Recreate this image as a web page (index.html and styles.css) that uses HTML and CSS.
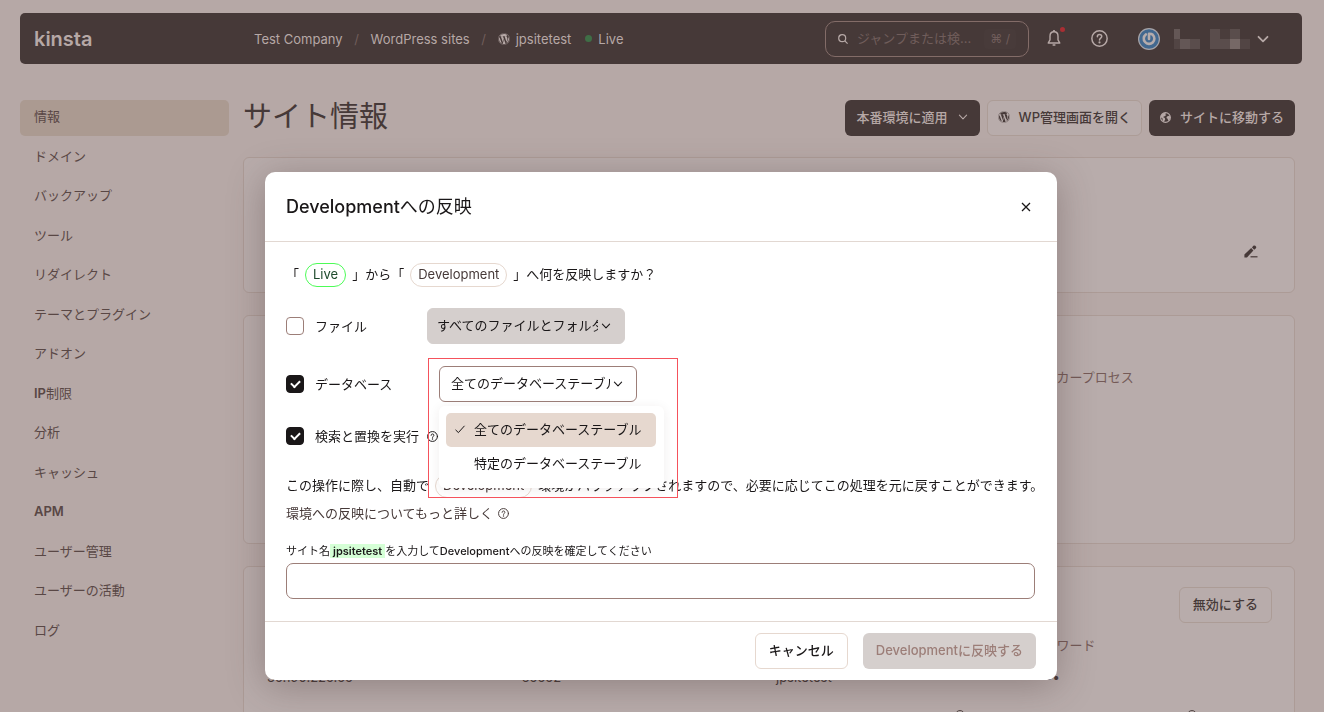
FILE: index.html
```html
<!DOCTYPE html>
<html lang="ja">
<head>
<meta charset="utf-8">
<title>サイト情報</title>
<link rel="stylesheet" href="styles.css">
</head>
<body>
<svg class="sprite" aria-hidden="true">
  <symbol id="wp" viewBox="0 0 512 512"><path fill="currentColor" d="M61.7 169.4l101.5 278C92.2 413 43.3 340.2 43.3 256c0-30.9 6.6-60.1 18.4-86.6zm337.9 75.9c0-26.3-9.4-44.5-17.5-58.7-10.8-17.5-20.9-32.4-20.9-49.9 0-19.6 14.8-37.8 35.7-37.8.9 0 1.8.1 2.8.2-37.9-34.7-88.3-55.9-143.7-55.9-74.3 0-139.7 38.1-177.8 95.9 5 .2 9.7.3 13.7.3 22.2 0 56.7-2.7 56.7-2.7 11.5-.7 12.8 16.2 1.4 17.5 0 0-11.5 1.3-24.3 2l77.5 230.4L249.8 247l-33.1-90.8c-11.5-.7-22.3-2-22.3-2-11.5-.7-10.1-18.2 1.3-17.5 0 0 35.1 2.7 56 2.7 22.2 0 56.7-2.7 56.7-2.7 11.5-.7 12.8 16.2 1.4 17.5 0 0-11.5 1.3-24.3 2l76.9 228.7 21.2-70.9c9-29.4 16-50.5 16-68.7zm-139.9 29.3l-63.8 185.5c19.1 5.6 39.2 8.7 60.1 8.7 24.8 0 48.5-4.3 70.6-12.1-.6-.9-1.1-1.9-1.5-2.9l-65.4-179.2zm183-120.7c.9 6.8 1.4 14 1.4 21.9 0 21.6-4 45.8-16.2 76.2l-65 187.9C426.2 403 468.7 334.5 468.7 256c0-37-9.4-71.8-26-102.1zM504 256c0 136.8-111.3 248-248 248C119.2 504 8 392.7 8 256 8 119.2 119.2 8 256 8c136.7 0 248 111.2 248 248zm-11.4 0c0-130.5-106.2-236.6-236.6-236.6C125.5 19.4 19.4 125.5 19.4 256S125.6 492.6 256 492.6c130.5 0 236.6-106.1 236.6-236.6z"/></symbol>
  <symbol id="chevron" viewBox="0 0 10 10"><path fill="none" stroke="currentColor" stroke-width="1.1" stroke-linecap="round" stroke-linejoin="round" d="M1.400 3.200 5 6.800 8.600 3.200"/></symbol>
  <symbol id="help" viewBox="0 0 16 16"><g fill="none" stroke="currentColor" stroke-width="1.4" stroke-linecap="round"><circle cx="8" cy="8" r="7.200"/><path d="M6 6.300C6 5 6.900 4.300 8 4.300s2.100.7 2.100 1.900C10.100 7.600 8 7.700 8 9.300"/></g><circle cx="8" cy="11.700" r="1" fill="currentColor"/></symbol>
</svg>

<div class="page">
  <header class="topbar">
    <a class="logo" href="#">kinsta</a>
    <nav class="crumbs">
      <a href="#">Test Company</a><span class="slash">/</span>
      <a href="#">WordPress sites</a><span class="slash">/</span>
      <a href="#" class="crumb-site"><svg class="i12"><use href="#wp"/></svg>jpsitetest</a>
      <a href="#" class="crumb-env"><span class="dot"></span>Live</a>
    </nav>
    <div class="tools">
      <label class="search">
        <svg class="i10" viewBox="0 0 10 10" fill="none" stroke="currentColor" stroke-width="1.2"><circle cx="4.200" cy="4.200" r="3.500"/><path d="M6.800 6.800 9.600 9.600"/></svg>
        <input type="text" placeholder="ジャンプまたは検…" aria-label="検索">
        <kbd>⌘ /</kbd>
      </label>
      <button class="icon-btn bell" aria-label="通知">
        <svg width="14" height="17" viewBox="0 0 14 17" fill="none" stroke="currentColor" stroke-width="1.4" stroke-linejoin="round"><path d="M7 1.800C4.400 1.800 3 3.800 3 6.200v3.600L1.200 13h11.600L11 9.800V6.200C11 3.800 9.600 1.800 7 1.800Z"/><path d="M7 0v2M5.600 15h2.800" stroke-width="1.700"/></svg>
        <span class="alert"></span>
      </button>
      <button class="icon-btn" aria-label="ヘルプ"><svg class="i17"><use href="#help"/></svg></button>
      <button class="user" aria-label="アカウント">
        <svg class="i22" viewBox="0 0 22 22"><circle cx="11" cy="11" r="11" fill="#a7a4a8"/><circle cx="11" cy="11" r="9.800" fill="#42688f"/><path d="M7.800 6.400a5.300 5.300 0 1 0 7 .4Q13.500 5.600 11 5.700V11" fill="none" stroke="#b5acac" stroke-width="2.600" stroke-linecap="round" stroke-linejoin="round"/></svg>
        <svg class="mask" width="76" height="20" viewBox="0 0 76 20" shape-rendering="crispEdges"><path fill="#645756" d="M0 0h6v10H0zM6 10h10v10H6z"/><path fill="#5a4d4c" d="M16 10h10v10H16zM36 0h10v10H36zM56 0h10v10H56zM36 10h20v10H36z"/><path fill="#524544" d="M0 10h6v10H0zM66 10h10v10H66z"/><path fill="#4a3d3c" d="M46 0h10v10H46z"/><path fill="#766866" d="M56 10h10v10H56z"/></svg>
        <svg class="i12 user-chev" viewBox="0 0 12 12"><path fill="none" stroke="currentColor" stroke-width="1.800" stroke-linecap="round" stroke-linejoin="round" d="M1.500 3.800 6 8.300 10.500 3.800"/></svg>
      </button>
    </div>
  </header>

  <div class="columns">
    <nav class="side">
      <a class="active" href="#">情報</a>
      <a href="#">ドメイン</a>
      <a href="#">バックアップ</a>
      <a href="#">ツール</a>
      <a href="#">リダイレクト</a>
      <a href="#">テーマとプラグイン</a>
      <a href="#">アドオン</a>
      <a href="#"><b>IP</b>制限</a>
      <a href="#">分析</a>
      <a href="#">キャッシュ</a>
      <a href="#"><b>APM</b></a>
      <a href="#">ユーザー管理</a>
      <a href="#">ユーザーの活動</a>
      <a href="#">ログ</a>
    </nav>
    <main class="content">
      <div class="heading">
        <h1>サイト情報</h1>
        <div class="actions">
          <button class="btn dark">本番環境に適用<svg class="i10"><use href="#chevron"/></svg></button>
          <button class="btn faded"><svg class="i12"><use href="#wp"/></svg>WP管理画面を開く</button>
          <button class="btn dark"><svg class="i11" viewBox="0 0 11 11"><circle cx="5.500" cy="5.500" r="4.900" fill="none" stroke="currentColor" stroke-width="1.100"/><path fill="currentColor" d="M1 3.500 3 1.200 6 .8 5.200 2.200 6.400 3 4.600 4.200 3 5 4.800 6 5.200 7.600 3.800 10 2.600 8.400 2.600 6.400.8 5.200ZM7 4.400 9.600 3.600 10.300 5.500 9.400 8 8.200 8.800 7.600 6.800 6.400 6Z"/></svg>サイトに移動する</button>
        </div>
      </div>
      <section class="card card-basic">
        <button class="icon-btn edit" aria-label="編集"><svg width="14" height="13" viewBox="0 0 14 13"><path fill="currentColor" d="M.4 12.400v-3L7.200 3.100 9.400 5.400 3 12.400ZM8 2.400l2.200 2.300L11.700 3.500a1.600 1.600 0 0 0 0-2.300L11.300.8a1.600 1.600 0 0 0-2 0Z"/><path stroke="currentColor" stroke-width="1.200" d="M6.500 11.800h7"/></svg></button>
      </section>
      <section class="card card-env">
        <dl class="facts"><div class="last-col"><dt>ワーカープロセス</dt></div></dl>
      </section>
      <section class="card card-sftp">
        <button class="btn faded">無効にする</button>
        <dl class="facts">
          <div><dt></dt><dd>35.190.225.55</dd></div>
          <div><dt></dt><dd>65552</dd></div>
          <div><dt></dt><dd>jpsitetest</dd></div>
          <div><dt>パスワード</dt><dd>••••</dd></div>
        </dl>
        <div class="hints"><svg class="i10"><use href="#help"/></svg><svg class="i10"><use href="#help"/></svg></div>
      </section>
    </main>
  </div>
</div>

<div class="overlay">
  <form class="dialog" role="dialog" aria-labelledby="title">
    <header class="dialog-head">
      <h2 id="title"><b>Development</b>への反映</h2>
      <button type="button" class="close" aria-label="閉じる"><svg class="i10" viewBox="0 0 10 10"><path stroke="currentColor" stroke-width="1.300" d="M1 1 9 9M9 1 1 9"/></svg></button>
    </header>
    <div class="dialog-body">
      <p class="question">「<span class="pill live">Live</span>」から「<span class="pill">Development</span>」へ何を反映しますか？</p>

      <div class="row">
        <label class="check"><input type="checkbox">ファイル</label>
        <div class="pick muted">
          <select aria-label="ファイルの範囲"><option>すべてのファイルとフォルダ</option></select>
          <svg class="i10"><use href="#chevron"/></svg>
        </div>
      </div>

      <div class="row">
        <label class="check"><input type="checkbox" checked>データベース</label>
        <div class="pick db">
          <select aria-label="データベースの範囲"><option>全てのデータベーステーブル</option><option>特定のデータベーステーブル</option></select>
          <svg class="i10"><use href="#chevron"/></svg>
          <div class="menu" role="listbox">
            <button type="button" role="option" aria-selected="true"><svg class="i12" viewBox="0 0 12 12"><path fill="none" stroke="currentColor" stroke-width="1" d="M1.500 6.800 4.400 9.600 10.500 2.800"/></svg>全てのデータベーステーブル</button>
            <button type="button" role="option" aria-selected="false">特定のデータベーステーブル</button>
          </div>
          <div class="marker"></div>
        </div>
      </div>

      <div class="row replace">
        <label class="check"><input type="checkbox" checked>検索と置換を実行</label>
        <svg class="i11"><use href="#help"/></svg>
      </div>

      <p class="note">この操作に際し、自動で<span class="pill">Development</span>環境がバックアップされますので、必要に応じてこの処理を元に戻すことができます。</p>
      <p class="note"><a href="#">環境への反映についてもっと詳しく<svg class="i11"><use href="#help"/></svg></a></p>

      <label class="confirm-label" for="confirm">サイト名<mark>jpsitetest</mark>を入力して<b>Development</b>への反映を確定してください</label>
      <input class="confirm" id="confirm" type="text">
    </div>
    <footer class="dialog-foot">
      <button type="button" class="btn light">キャンセル</button>
      <button type="submit" class="btn disabled" disabled>Developmentに反映する</button>
    </footer>
  </form>
</div>
</body>
</html>
```
FILE: styles.css
```css
* { box-sizing: border-box; }

body {
  margin: 0;
  background: #b6a8a6;
  color: #463938;
  font: 13px/20px Inter, "Noto Sans CJK JP", sans-serif;
}

h1, h2, p, dl, dd { margin: 0; }
h1, h2 { font-weight: 400; }
b { font-weight: 500; }
a { color: inherit; text-decoration: none; }
button, input, select { font: inherit; color: inherit; }
button { padding: 0; border: 0; background: none; }
svg { display: block; flex: none; }

.sprite { position: absolute; width: 0; height: 0; }
.i10 { width: 10px; height: 10px; }
.i11 { width: 11px; height: 11px; }
.i12 { width: 12px; height: 12px; }
.i17 { width: 17px; height: 17px; }
.i22 { width: 22px; height: 22px; }

/* Top bar */
.page { height: 100vh; padding: 13px 22px 0 20px; overflow: hidden; }
.topbar {
  display: flex;
  align-items: center;
  height: 51px;
  padding: 0 33px 0 14px;
  border-radius: 5px;
  background: #463938;
  color: #b6a8a6;
}
.logo { width: 220px; font-size: 20px; font-weight: 600; }
.crumbs { display: flex; align-items: center; }
.slash { width: 28px; text-align: center; color: #705d5b; }
.crumb-site, .crumb-env { display: flex; align-items: center; gap: 6px; }
.crumb-env { margin-left: 14px; }
.dot { width: 7px; height: 7px; border-radius: 50%; background: #3f6e46; }

.tools { display: flex; align-items: center; margin-left: auto; }
.search {
  display: flex;
  align-items: center;
  width: 204px;
  height: 36px;
  padding: 0 12px;
  border: 1px solid #836c68;
  border-radius: 10px;
}
.search input {
  flex: 1;
  min-width: 0;
  padding: 0 0 2px 9px;
  border: 0;
  background: none;
}
.search input::placeholder { color: #705d5b; opacity: 1; }
.search kbd { padding: 0 6px; border-radius: 4px; background: #483b3a; color: #705d5b; font: 12px/20px Inter, "DejaVu Sans", sans-serif; }
.icon-btn { display: grid; place-items: center; }
.bell { position: relative; margin: 0 30px 0 18px; }
.alert { position: absolute; top: -3px; right: -4px; width: 5px; height: 5px; border-radius: 50%; background: #a92e33; }
.user { display: flex; align-items: center; gap: 14px; margin-left: 30px; }
.user-chev { margin-left: -7px; }

/* Page columns */
.columns { display: flex; gap: 14px; padding: 36px 7px 0 0; }
.side {
  display: grid;
  align-content: space-between;
  flex: none;
  width: 209px;
  height: 550px;
  color: #594745;
}
.side a { height: 36px; padding-left: 14px; border-radius: 5px; line-height: 33px; }
.side b { font-weight: 600; }
.side .active { background: #ab9a91; }

.content { flex: 1; min-width: 0; }
.heading { display: flex; align-items: center; justify-content: space-between; height: 36px; margin-bottom: 21px; }
h1 { padding-bottom: 3px; font-size: 29px; line-height: 36px; }
.actions { display: flex; gap: 7px; }
.btn {
  display: flex;
  align-items: center;
  justify-content: center;
  gap: 9px;
  height: 36px;
  padding: 0 13px 2px;
  border: 1px solid transparent;
  border-radius: 6px;
  font-weight: 500;
  white-space: nowrap;
}
.actions .btn { padding: 0 10px 2px; }
.actions .btn:first-child { gap: 10px; padding: 0 11px 2px; }
.btn.dark { background: #463938; color: #b6a8a6; }
.btn.faded { background: #b8acab; border-color: #ac9c96; }
.btn.light { border-color: #e6d8cf; color: #1a1718; }
.btn.disabled { padding: 0 12px 2px; background: #d5cfcd; color: #9c7e78; }

.card {
  margin-bottom: 22px;
  padding: 20px 22px 20px 23px;
  border: 1px solid #ac9b96;
  border-radius: 6px;
  background: #b8acab;
}
.card-basic { display: flex; align-items: flex-end; justify-content: flex-end; height: 136px; padding: 20px 36px 34px; }
.card-env { height: 229px; padding-top: 51px; }
.card-sftp { height: 300px; }
.card-sftp .btn { margin-left: auto; }
.facts { display: grid; grid-template-columns: repeat(4, 1fr); margin: 12px -13px 0 0; }
.card-env .facts { margin-top: 0; }
.last-col { grid-column: 4; }
dt { height: 20px; color: #745a57; }
dd { margin-top: 12px; color: #463938; }
.facts div { white-space: nowrap; }
.hints { display: flex; justify-content: flex-end; gap: 222px; margin: 23px 75px 0; }

/* Dialog */
.overlay { position: fixed; inset: 0; display: flex; align-items: flex-start; justify-content: center; padding: 172px 2px 0 0; }
.dialog {
  width: 792px;
  max-width: 100%;
  border-radius: 10px;
  background: #fff;
  color: #1a1718;
  box-shadow: 0 6px 36px rgba(70, 50, 50, 0.35);
}
.dialog-head {
  display: flex;
  align-items: center;
  justify-content: space-between;
  height: 70px;
  padding: 0 26px 0 21px;
  border-bottom: 1px solid #e2d8d2;
}
h2 { font-size: 18px; line-height: 24px; }
.dialog-body { padding: 20px 22px 22px 21px; }
.question, .note { white-space: nowrap; }
.question { margin-bottom: 21px; line-height: 24px; }
.pill {
  display: inline-block;
  height: 24px;
  margin: 0 6px;
  padding: 0 7px;
  border: 1px solid #e6d8cf;
  border-radius: 12px;
  color: #463938;
  line-height: 21px;
}
.pill.live { border-color: #4dfc57; color: #1d4a2c; }

.row { display: flex; align-items: center; height: 36px; margin-bottom: 22px; }
.check { display: flex; align-items: center; gap: 11px; width: 141px; white-space: nowrap; }
.check input {
  appearance: none;
  display: grid;
  place-items: center;
  width: 18px;
  height: 18px;
  margin: 0;
  border: 1px solid #9c7e78;
  border-radius: 4px;
}
.check input:checked { border-color: #1a1718; background: #1a1718; }
.check input:checked::before {
  content: "";
  width: 7px;
  height: 4px;
  margin-bottom: 2px;
  border: solid #fff;
  border-width: 0 0 2px 2px;
  rotate: -45deg;
}
.pick { position: relative; width: 198px; }
.pick select {
  appearance: none;
  display: block;
  width: 100%;
  height: 36px;
  padding: 0 26px 2px 11px;
  border: 1px solid #9c7e78;
  border-radius: 6px;
  background: #fff;
}
.pick > svg { position: absolute; right: 14px; top: 13px; pointer-events: none; }
.muted select { padding-left: 9px; border-color: #d5cfcd; background: #d5cfcd; }
.db { margin-left: 12px; }
.menu {
  position: absolute;
  z-index: 1;
  top: 100%;
  left: 0;
  width: 225px;
  margin-top: 4px;
  padding: 7px 8px 7px 7px;
  border-radius: 6px;
  background: #fff;
  box-shadow: 0 2px 12px rgba(60, 40, 40, 0.08);
}
.menu button { display: flex; align-items: center; gap: 8px; width: 100%; height: 34px; padding: 0 0 2px 28px; border-radius: 5px; white-space: nowrap; }
.menu [aria-selected="true"] { padding-left: 8px; background: #e6d8cf; }
.marker { position: absolute; z-index: 2; top: -8px; left: -11px; width: 250px; height: 140px; border: 1px solid #f5525c; pointer-events: none; }
.replace { height: 20px; margin: 24px 0 25px; }
.note { line-height: 28px; }
.note .pill { vertical-align: middle; }
.note a { display: inline-flex; align-items: center; gap: 5px; color: #463938; }
.confirm-label { display: block; margin: 14px 0 2px; font-size: 11px; line-height: 20px; }
mark { padding: 0 3px; background: #d5ffd6; color: inherit; font-weight: 600; }
.confirm { display: block; width: 100%; height: 36px; padding: 0 12px; border: 1px solid #9c7e78; border-radius: 7px; background: #fff; }
.dialog-foot { display: flex; justify-content: flex-end; gap: 15px; padding: 11px 21px; border-top: 1px solid #e2d8d2; }
```
